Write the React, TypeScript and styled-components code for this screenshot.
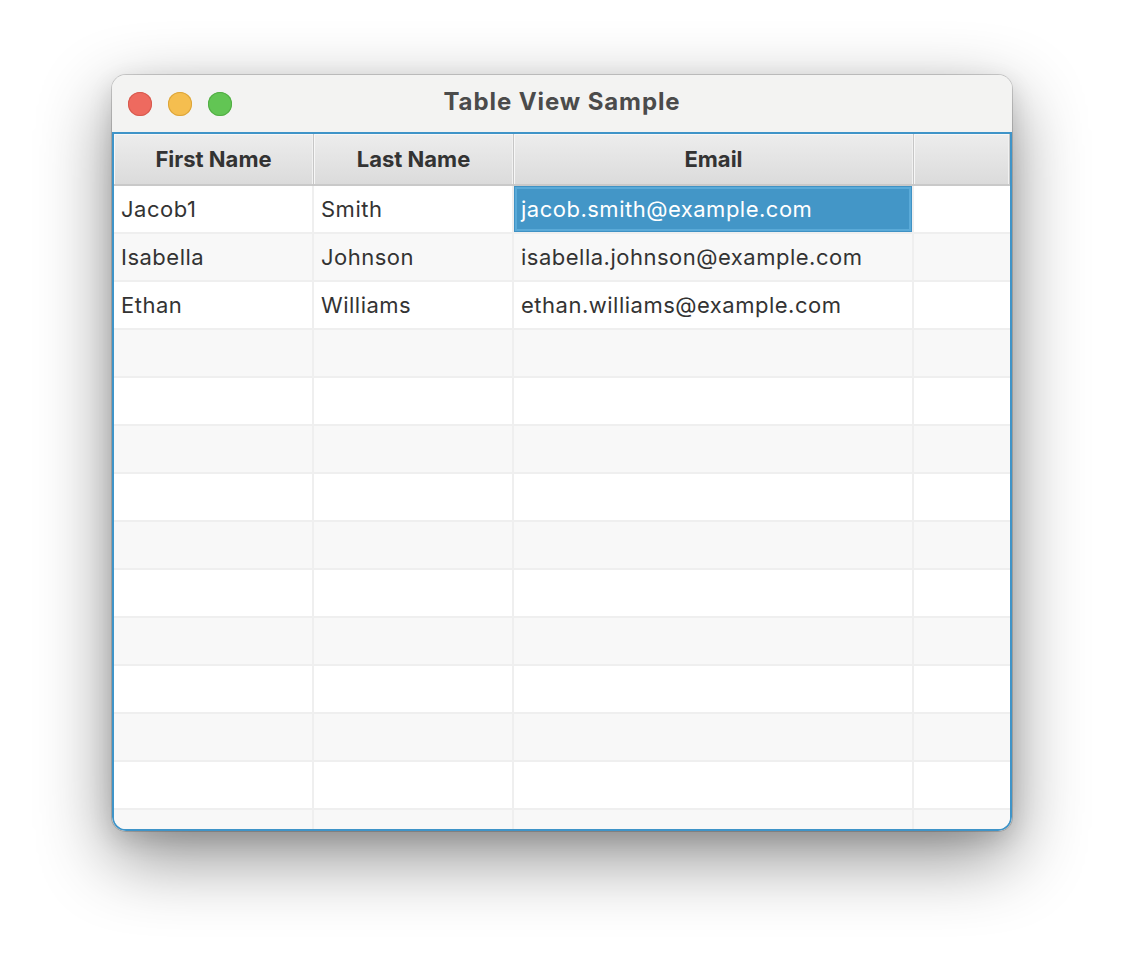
import React from "react";
import styled, { createGlobalStyle } from "styled-components";

const Global = createGlobalStyle`
  html, body { margin: 0; padding: 0; background: #ffffff; }
  body { font-family: Inter, "Noto Sans", "Liberation Sans", sans-serif; }
  * { box-sizing: border-box; }
`;

const Page = styled.div`
  width: 1124px;
  height: 980px;
  padding: 75px 0 0 112px;
  background: #ffffff;
`;

const Window = styled.div`
  width: 900px;
  height: 756px;
  border-radius: 14px;
  overflow: hidden;
  background: #f3f3f2;
  display: flex;
  flex-direction: column;
  box-shadow: 0 0 0 1px rgba(0, 0, 0, 0.16), 0 26px 72px rgba(0, 0, 0, 0.45),
    0 8px 24px rgba(0, 0, 0, 0.12);
`;

const TitleBar = styled.div`
  height: 57px;
  flex: none;
  display: flex;
  align-items: center;
  position: relative;
  padding-left: 16px;
  background: #f3f3f2;
`;

const Lights = styled.div`
  display: flex;
  gap: 16px;
  align-items: center;
  margin-top: 1px;
`;

const Light = styled.span<{ $fill: string; $edge: string }>`
  width: 24px;
  height: 24px;
  border-radius: 50%;
  background: ${(p) => p.$fill};
  box-shadow: inset 0 0 0 1px ${(p) => p.$edge};
`;

const Title = styled.div`
  position: absolute;
  left: 0;
  right: 0;
  top: 0;
  height: 52px;
  display: flex;
  align-items: center;
  justify-content: center;
  font-weight: 700;
  font-size: 24px;
  letter-spacing: 0.9px;
  color: #4b4b4b;
  pointer-events: none;
`;

const Table = styled.div`
  flex: 1;
  border: 2px solid #3f94c8;
  border-radius: 0 0 14px 14px;
  background: #ffffff;
  overflow: hidden;
`;

const Grid = styled.div`
  display: grid;
  grid-template-columns: 200px 200px 400px 1fr;
`;

const HeaderCell = styled.div`
  height: 52px;
  display: flex;
  align-items: center;
  justify-content: center;
  font-weight: 700;
  font-size: 22px;
  color: #333333;
  background: linear-gradient(#ededed, #dbdbdb);
  border-right: 1px solid #c6c6c6;
  border-bottom: 2px solid #c9c9c9;
  box-shadow: inset 1px 1px 0 #f7f7f7, inset -1px 0 0 #f1f1f1;
  &:last-child {
    border-right: none;
  }
`;

const Cell = styled.div<{ $alt: boolean; $selected?: boolean }>`
  height: 48px;
  display: flex;
  align-items: center;
  padding: 0 0 0 7px;
  font-size: 22px;
  letter-spacing: 0.5px;
  color: ${(p) => (p.$selected ? "#ffffff" : "#333333")};
  background: ${(p) => (p.$selected ? "#4396c7" : p.$alt ? "#f8f8f8" : "#ffffff")};
  border-right: 2px solid #efefef;
  border-bottom: 2px solid #efefef;
  box-shadow: ${(p) =>
    p.$selected ? "inset 0 0 0 1px #4092c4, inset 0 0 0 3px #5aaad8" : "none"};
  white-space: nowrap;
  overflow: hidden;
  &:nth-child(4n) {
    border-right: none;
  }
`;

const people = [
  ["Jacob1", "Smith", "jacob.smith@example.com"],
  ["Isabella", "Johnson", "isabella.johnson@example.com"],
  ["Ethan", "Williams", "ethan.williams@example.com"],
];

export default function App() {
  const rows = Array.from({ length: 14 }, (_, i) => people[i] ?? ["", "", ""]);
  return (
    <Page>
      <Global />
      <Window>
        <TitleBar>
          <Lights>
            <Light $fill="#ee6a5f" $edge="#d65a4f" />
            <Light $fill="#f5be4f" $edge="#dca53a" />
            <Light $fill="#62c554" $edge="#52ad45" />
          </Lights>
          <Title>Table View Sample</Title>
        </TitleBar>
        <Table>
          <Grid>
            <HeaderCell>First Name</HeaderCell>
            <HeaderCell>Last Name</HeaderCell>
            <HeaderCell>Email</HeaderCell>
            <HeaderCell />
            {rows.map((r, i) => (
              <React.Fragment key={i}>
                <Cell $alt={i % 2 === 1}>{r[0]}</Cell>
                <Cell $alt={i % 2 === 1}>{r[1]}</Cell>
                <Cell $alt={i % 2 === 1} $selected={i === 0}>
                  {r[2]}
                </Cell>
                <Cell $alt={i % 2 === 1} />
              </React.Fragment>
            ))}
          </Grid>
        </Table>
      </Window>
    </Page>
  );
}
